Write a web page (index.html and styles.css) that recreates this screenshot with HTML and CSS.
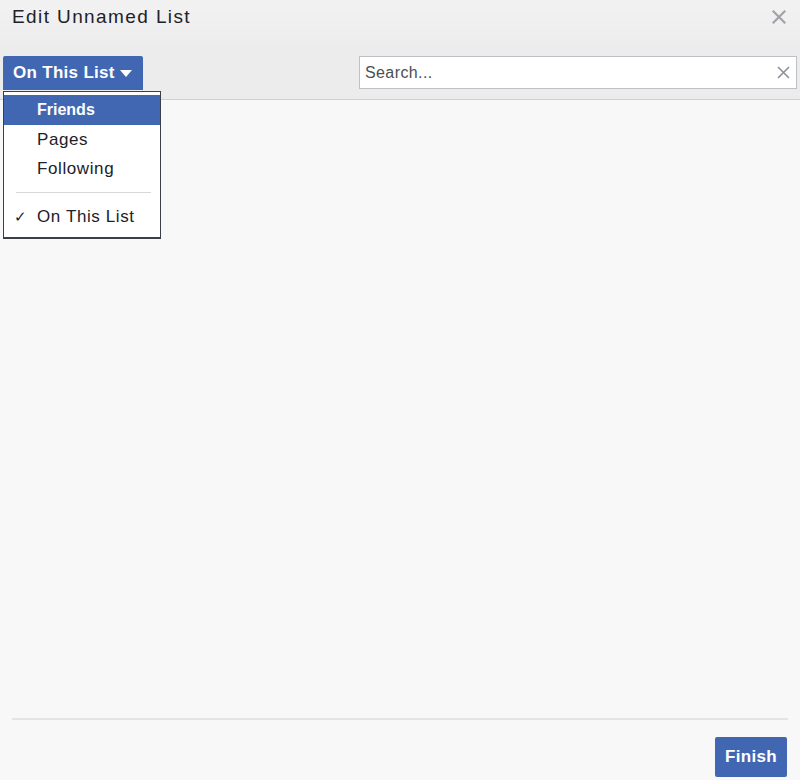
FILE: index.html
```html
<!DOCTYPE html>
<html>
<head>
<meta charset="utf-8">
<link rel="stylesheet" href="styles.css">
</head>
<body>
<div class="dialog">
  <div class="header">
    <div class="title">Edit Unnamed List</div>
    <div class="close">
      <svg width="14" height="14" viewBox="0 0 14 14"><path d="M1.5 1.5L12.5 12.5M12.5 1.5L1.5 12.5" stroke="#a0a3a8" stroke-width="2.2" stroke-linecap="square"/></svg>
    </div>
  </div>
  <div class="toolbar">
    <div class="btn-wrap">
      <div class="filter-btn">On This List <span class="caret"></span></div>
      <div class="menu">
        <div class="item active">Friends</div>
        <div class="item">Pages</div>
        <div class="item">Following</div>
        <div class="sep"></div>
        <div class="item checked"><span class="check">✓</span>On This List</div>
      </div>
    </div>
    <div class="search">
      <span class="placeholder">Search...</span>
      <svg width="13" height="13" viewBox="0 0 13 13"><path d="M1 1L12 12M12 1L1 12" stroke="#8d9096" stroke-width="1.6"/></svg>
    </div>
  </div>
  <div class="content"></div>
  <div class="footer">
    <div class="finish">Finish</div>
  </div>
</div>
</body>
</html>
```
FILE: styles.css
```css
html, body {
  margin: 0;
  padding: 0;
}
body {
  font-family: "Liberation Sans", Arial, sans-serif;
  background: #f7f7f7;
  width: 800px;
  height: 780px;
  overflow: hidden;
}
.dialog {
  display: flex;
  flex-direction: column;
  height: 780px;
  background: #f8f8f8;
}
.header {
  height: 44px;
  background: linear-gradient(#f2f2f2, #ededed);
  display: flex;
  align-items: center;
  justify-content: space-between;
  padding: 0 14px 0 12px;
}
.title {
  font-size: 19px;
  letter-spacing: 1.4px;
  color: #1d2129;
  margin-top: -10px;
}
.close {
  display: flex;
  margin-top: -10px;
}
.toolbar {
  background: #ececec;
  border-bottom: 1px solid #cfd0d2;
  display: flex;
  align-items: flex-start;
  justify-content: space-between;
  padding: 12px 3px 0 3px;
  box-sizing: border-box;
  height: 56px;
}
.btn-wrap {
  position: relative;
}
.filter-btn {
  background: #4267b2;
  color: #fff;
  font-weight: bold;
  font-size: 17px;
  letter-spacing: 0.3px;
  height: 34px;
  width: 140px;
  box-sizing: border-box;
  padding: 0 0 0 10px;
  display: flex;
  align-items: center;
  border-radius: 2px 2px 0 0;
}
.caret {
  display: inline-block;
  width: 0;
  height: 0;
  border-left: 6px solid transparent;
  border-right: 6px solid transparent;
  border-top: 7px solid #fff;
  margin-left: 5px;
}
.menu {
  position: absolute;
  top: 35px;
  left: 0;
  width: 158px;
  height: 148px;
  box-sizing: border-box;
  background: #fff;
  border: 1px solid #3b3f46;
  border-bottom-width: 2px;
  padding-top: 3px;
  z-index: 2;
}
.item {
  font-size: 17px;
  letter-spacing: 0.6px;
  color: #1d2129;
  height: 29px;
  line-height: 29px;
  padding-left: 33px;
  position: relative;
}
.item.active {
  background: #4267b2;
  color: #fff;
  font-weight: bold;
  font-size: 16px;
  letter-spacing: 0;
  height: 30px;
  line-height: 30px;
}
.item.checked {
  height: 30px;
  line-height: 30px;
}
.check {
  position: absolute;
  left: 10px;
  font-size: 15px;
}
.sep {
  height: 1px;
  background: #d6d7da;
  margin: 9px 9px 9px 12px;
}
.search {
  width: 438px;
  height: 33px;
  box-sizing: border-box;
  background: #fff;
  border: 1px solid #bdc0c4;
  display: flex;
  align-items: center;
  justify-content: space-between;
  padding: 0 6px 0 5px;
}
.placeholder {
  font-size: 16px;
  letter-spacing: 0.4px;
  color: #4b4f56;
}
.content {
  flex: 1;
  background: #f8f8f8;
}
.footer {
  margin: 0 12px;
  border-top: 2px solid #e4e4e4;
  height: 62px;
  display: flex;
  justify-content: flex-end;
  align-items: flex-start;
  padding-top: 17px;
  box-sizing: border-box;
}
.finish {
  background: #4267b2;
  color: #fff;
  font-weight: bold;
  font-size: 17px;
  letter-spacing: 0.3px;
  width: 72px;
  height: 40px;
  display: flex;
  align-items: center;
  justify-content: center;
  border-radius: 2px;
  margin-right: 1px;
}
```
